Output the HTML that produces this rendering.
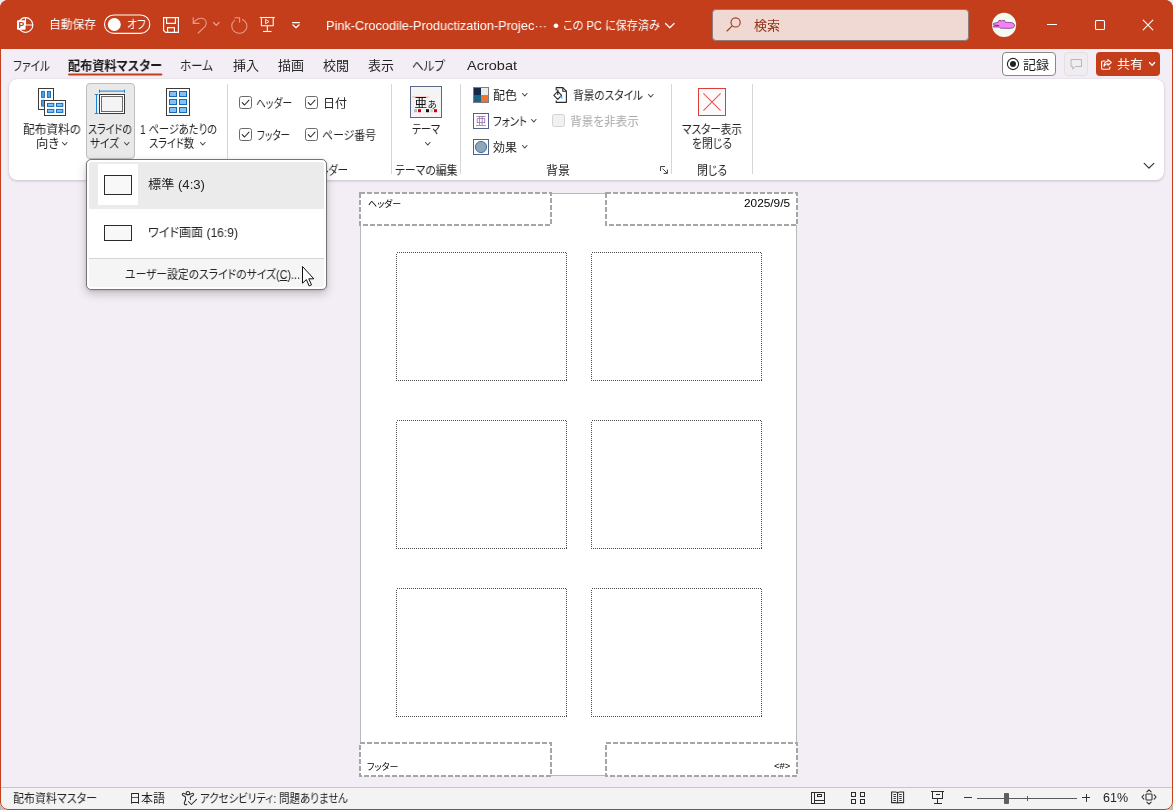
<!DOCTYPE html>
<html lang="ja"><head><meta charset="utf-8"><title>PowerPoint - 配布資料マスター</title>
<style>
html,body{margin:0;padding:0;}
body{width:1173px;height:810px;overflow:hidden;background:linear-gradient(#ececec 0,#ececec 50%,#bdbdbd 50%,#bdbdbd 100%);font-family:"Liberation Sans","Noto Sans CJK JP",sans-serif;}
#win{position:absolute;left:0;top:0;width:1173px;height:810px;border-radius:8px;background:#f3edf5;overflow:hidden;}
#win>*{position:absolute;}
#frame{position:absolute;left:0;top:0;width:1171px;height:808px;border:1px solid #c43e1c;border-radius:8px;pointer-events:none;}
.a{position:absolute;}
.t{position:absolute;z-index:3;white-space:nowrap;transform-origin:0 50%;font-feature-settings:"palt";will-change:transform;}
.t u{text-decoration:underline;text-underline-offset:1px;}
#title{left:0;top:0;width:1173px;height:49px;background:#c43e1c;}
#ribbon{left:9px;top:79px;width:1155px;height:101px;background:#fff;border-radius:8px;box-shadow:0 1px 3px rgba(0,0,0,.18),0 0 1px rgba(0,0,0,.12);}
.vsep{width:1px;background:#d6d6d6;top:84px;height:90px;}
.cb{width:11px;height:11px;border:1px solid #6e6e6e;border-radius:2px;background:#fff;}
#status{left:0;top:787px;width:1173px;height:23px;background:#f3f3f3;border-top:1px solid #c8c6c4;}
#page{left:361px;top:194px;width:435px;height:581px;background:#fff;box-shadow:0 0 0 1px #d9d9d9;}
.ph{border:1px dotted #3a3a3a;width:169px;height:127px;background:#fff;}
.hf{border:2px dashed #a6a6a6;width:189px;height:29px;background:#fff;}
#menu{z-index:2;left:86px;top:159px;width:239px;height:129px;background:#fff;border:1px solid #757575;border-radius:5px;box-shadow:0 4px 10px rgba(0,0,0,.2),0 1px 3px rgba(0,0,0,.12);overflow:hidden;}

</style></head>
<body>
<div id="win">
<div id="title" style="left:0;top:0"></div>
<!-- PowerPoint logo -->
<svg style="left:16px;top:16px;will-change:transform" width="18" height="18" viewBox="0 0 18 18">
  <circle cx="9.5" cy="9" r="7.3" fill="none" stroke="#fff" stroke-width="1.2"/>
  <path d="M9.5 1.7 V9 H16.8" fill="none" stroke="#fff" stroke-width="1.1"/>
  <rect x="1" y="4.2" width="8.6" height="9.6" rx="1" fill="#fff"/>
  <text x="5.3" y="12.2" font-family="Liberation Sans, sans-serif" font-weight="700" font-size="8.6" fill="#c43e1c" text-anchor="middle">P</text>
</svg>
<!-- autosave toggle -->
<svg style="left:100px;top:10px" width="56" height="30" viewBox="100 10 56 30"><rect x="104.5" y="15" width="45.3" height="18.4" rx="9.2" fill="none" stroke="#fff" stroke-width="1.1"/><circle cx="114.3" cy="24.5" r="6.5" fill="#fff"/></svg>
<!-- save -->
<svg style="left:162px;top:16px" width="18" height="18" viewBox="0 0 18 18" fill="none" stroke="#fff" stroke-width="1.15">
  <path d="M1.6 1.6 H16.4 V16.4 H3.6 L1.6 14.4 Z"/>
  <path d="M4.6 1.6 V7.4 H13.4 V1.6"/>
  <path d="M5.6 16.4 V11.6 H12.4 V16.4"/>
</svg>
<!-- undo (dim) -->
<svg style="left:191px;top:16px" width="18" height="18" viewBox="0 0 18 18" fill="none" stroke="#e29e8b" stroke-width="1.1" stroke-linecap="round" stroke-linejoin="round">
  <path d="M2.2 1.6 V7.4 H8"/>
  <path d="M2.4 7.2 C4.5 3.6 8.6 1.4 12 2.6 C15.4 3.8 16.2 7.6 14.2 10.4 L7.2 17"/>
</svg>
<!-- redo (dim) -->
<svg style="left:228.8px;top:15.9px" width="20" height="19" viewBox="0 0 20 20" preserveAspectRatio="none" fill="none" stroke="#e29e8b" stroke-width="1.1" stroke-linecap="round" stroke-linejoin="round">
  <path d="M10.6 1.8 V6.6 M10.6 1.8 H6"/>
  <path d="M5.6 4.6 A7.6 7.6 0 1 0 13.4 3.6"/>
</svg>
<!-- present from beginning -->
<svg style="left:258.6px;top:16px" width="16.6" height="17" viewBox="0 0 18 18" preserveAspectRatio="none" fill="none" stroke="#fff" stroke-width="1.15">
  <path d="M0.8 1.6 H17.2"/>
  <path d="M2.6 1.6 V10.4 H15.4 V1.6"/>
  <path d="M9 10.4 V16"/>
  <path d="M4.4 16.4 H13.6"/>
  <path d="M7.2 3.6 L10.8 5.9 L7.2 8.2 Z" stroke-width="1"/>
</svg>
<!-- customize QAT -->
<svg style="left:291.4px;top:20.6px" width="10" height="9" viewBox="0 0 10 9" fill="none" stroke="#fff" stroke-width="1.2" stroke-linecap="round" stroke-linejoin="round">
  <path d="M1.6 1.6 H8.4"/>
  <path d="M1.8 3.8 L5 6.8 L8.2 3.8"/>
</svg>
<!-- search -->
<div style="left:712px;top:9px;width:255px;height:30px;background:#f0d9d2;border:1px solid #8f7d7a;border-radius:4px;"></div>
<svg style="left:724.5px;top:16px" width="18" height="18" viewBox="0 0 18 18" fill="none" stroke="#a03a20" stroke-width="1.15" stroke-linecap="round">
  <circle cx="10.6" cy="6.4" r="4.6"/>
  <path d="M7.2 9.8 L2 15"/>
</svg>
<!-- avatar -->
<svg style="left:988px;top:9px" width="32" height="32" viewBox="988 9 32 32">
  <circle cx="1004.1" cy="24.9" r="12.05" fill="#f5faf3"/>
  <path d="M993.5 23.4 L997.9 22.3 L998.9 20.5 L1001 20.4 L1001.5 21.3 L1002.2 20.4 L1004.6 20.4 L1005.2 22.2 L1011.6 22.6 C1013.6 22.9 1014.6 24.2 1014.6 25.5 C1014.4 27 1013.4 27.8 1012.4 28 L1009.5 28.4 L1000.6 28.2 L999.2 27.1 L993.5 27.1 C993 26.6 993.2 26.2 993.8 25.9 L998.9 25.5 L993.8 25.1 C993 24.6 993 23.9 993.5 23.4 Z" fill="#f77ff7" stroke="#3d0f40" stroke-width=".55" stroke-linejoin="round"/>
</svg>
<!-- window controls -->
<svg style="left:1045.7px;top:18.6px" width="12" height="12" viewBox="0 0 12 12" stroke="#fff" stroke-width="1.1" fill="none"><path d="M1 5.5 H11"/></svg>
<svg style="left:1093.7px;top:18.8px" width="12" height="12" viewBox="0 0 12 12" stroke="#fff" stroke-width="1.1" fill="none"><rect x="1.5" y="1.5" width="9" height="9" rx="1"/></svg>
<svg style="left:1141.8px;top:18.8px" width="12" height="12" viewBox="0 0 12 12" stroke="#fff" stroke-width="1.1" fill="none" stroke-linecap="round"><path d="M1.2 1.2 L10.8 10.8 M10.8 1.2 L1.2 10.8"/></svg>

<!-- tab underline -->
<svg style="left:66px;top:72px" width="100" height="5" viewBox="66 72 100 5"><rect x="68" y="73.4" width="94.4" height="2.1" rx="1" fill="#c43e1c"/></svg>
<!-- record button -->
<div style="left:1002px;top:52px;width:52px;height:22px;background:#fff;border:1px solid #8a8886;border-radius:4px;"></div>
<svg style="left:1006px;top:57px" width="14" height="14" viewBox="0 0 14 14"><circle cx="7" cy="7" r="5.6" fill="none" stroke="#222" stroke-width="1.1"/><circle cx="7" cy="7" r="3" fill="#222"/></svg>
<!-- comments (disabled) -->
<div style="left:1064px;top:52px;width:22px;height:22px;background:#efedf0;border:1px solid #e2e0e3;border-radius:4px;"></div>
<svg style="left:1068.5px;top:57px" width="14" height="14" viewBox="0 0 14 14" fill="none" stroke="#b9b5ba" stroke-width="1"><path d="M2 2.5 H12.5 V9.5 H6.5 L3.8 12.2 V9.5 H2 Z" stroke-linejoin="round"/></svg>
<!-- share -->
<div style="left:1096px;top:52px;width:64px;height:24px;background:#c43e1c;border-radius:4px;"></div>
<svg style="left:1100.2px;top:57.6px" width="13" height="13" viewBox="0 0 15 15" fill="none" stroke="#fff" stroke-width="1.3" stroke-linecap="round" stroke-linejoin="round">
  <path d="M5.6 3.4 H3.4 C2.4 3.4 1.8 4 1.8 5 V11.4 C1.8 12.4 2.4 13 3.4 13 H9.8 C10.8 13 11.4 12.4 11.4 11.4 V10.4"/>
  <path d="M9.2 1.8 L13 5.2 L9.2 8.6 V6.6 C6.8 6.6 5.4 7.6 4.6 9.6 C4.6 6.4 6.2 4.2 9.2 3.8 Z"/>
</svg>
<svg style="left:1171px;top:1px" width="0" height="0"></svg>

<div id="ribbon"></div>
<!-- group 1: page setup -->
<svg style="left:36px;top:86px" width="32" height="32" viewBox="36 86 32 32">
  <rect x="38.5" y="88.5" width="15" height="21" fill="#fff" stroke="#3b3b3b" stroke-width="1"/>
  <g fill="#4ea3ea" stroke="#0f64b8" stroke-width=".9">
  <rect x="41.6" y="91.4" width="2.8" height="6"/><rect x="47.4" y="91.4" width="3.1" height="6"/><rect x="41.6" y="100.3" width="2.8" height="5.8"/>
  </g>
  <rect x="44.5" y="100.5" width="21" height="15" fill="#fff" stroke="#3b3b3b" stroke-width="1"/>
  <g fill="#86c0f0" stroke="#0f6cbd" stroke-width="1">
  <rect x="47.5" y="103.4" width="6.3" height="3"/><rect x="56.5" y="103.4" width="6.3" height="3"/>
  <rect x="47.5" y="109.4" width="6.3" height="3"/><rect x="56.5" y="109.4" width="6.3" height="3"/>
  </g>
</svg>
<div style="left:86px;top:83px;width:47px;height:74px;background:#e9e9e9;border:1px solid #bdbdbd;border-radius:4px;"></div>
<svg style="left:94px;top:87px" width="34" height="30" viewBox="94 87 34 30" fill="none">
  <path d="M99.5 91.1 H124.5 M99.5 89.6 V92.8 M124.5 89.6 V92.8" stroke="#1e7fd6" stroke-width="1"/>
  <path d="M96.5 94.5 V113.5 M94.8 94.5 H98.2 M94.8 113.5 H98.2" stroke="#1e7fd6" stroke-width="1"/>
  <rect x="99.5" y="94.5" width="25" height="19" fill="#fff" stroke="#3b3b3b" stroke-width="1"/>
  <rect x="101.5" y="96.5" width="21" height="15" fill="#f4f4f4" stroke="#6a6a6a" stroke-width="1"/>
</svg>
<svg style="left:164px;top:86px" width="28" height="32" viewBox="164 86 28 32">
  <rect x="166.5" y="88.5" width="23" height="27" fill="#fff" stroke="#3b3b3b" stroke-width="1"/>
  <g fill="#86c0f0" stroke="#0f6cbd" stroke-width="1">
  <rect x="169.5" y="91.5" width="7" height="5"/><rect x="179.5" y="91.5" width="7" height="5"/>
  <rect x="169.5" y="99.5" width="7" height="5"/><rect x="179.5" y="99.5" width="7" height="5"/>
  <rect x="169.5" y="107.5" width="7" height="5"/><rect x="179.5" y="107.5" width="7" height="5"/>
  </g>
</svg>
<div class="vsep" style="left:227px"></div>
<!-- group 2: placeholders -->
<svg style="left:239px;top:96px" width="13" height="13" viewBox="0 0 13 13" fill="none"><rect x=".5" y=".5" width="12" height="12" rx="2" fill="#fff" stroke="#6a6a6a"/><path d="M3.2 6.6 L5.6 9 L10 4.2" stroke="#333" stroke-width="1.1" stroke-linecap="round" stroke-linejoin="round"/></svg>
<svg style="left:239px;top:128px" width="13" height="13" viewBox="0 0 13 13" fill="none"><rect x=".5" y=".5" width="12" height="12" rx="2" fill="#fff" stroke="#6a6a6a"/><path d="M3.2 6.6 L5.6 9 L10 4.2" stroke="#333" stroke-width="1.1" stroke-linecap="round" stroke-linejoin="round"/></svg>
<svg style="left:305px;top:96px" width="13" height="13" viewBox="0 0 13 13" fill="none"><rect x=".5" y=".5" width="12" height="12" rx="2" fill="#fff" stroke="#6a6a6a"/><path d="M3.2 6.6 L5.6 9 L10 4.2" stroke="#333" stroke-width="1.1" stroke-linecap="round" stroke-linejoin="round"/></svg>
<svg style="left:305px;top:128px" width="13" height="13" viewBox="0 0 13 13" fill="none"><rect x=".5" y=".5" width="12" height="12" rx="2" fill="#fff" stroke="#6a6a6a"/><path d="M3.2 6.6 L5.6 9 L10 4.2" stroke="#333" stroke-width="1.1" stroke-linecap="round" stroke-linejoin="round"/></svg>
<div class="vsep" style="left:391px"></div>
<!-- group 3: theme -->
<svg style="left:410px;top:86px;will-change:transform" width="32" height="32" viewBox="0 0 32 32">
  <rect x=".5" y=".5" width="31" height="31" fill="#f4f4f4" stroke="#5b6785"/>
  <rect x="2" y="10" width="17.5" height="2" fill="#f6c9c6" opacity=".8"/>
  <text x="4.4" y="21.4" font-family="Liberation Sans, Noto Sans CJK JP, sans-serif" font-size="12.6" fill="#111">亜</text>
  <text x="17.4" y="21.6" font-family="Liberation Sans, Noto Sans CJK JP, sans-serif" font-size="9.4" fill="#111">あ</text>
  <rect x="4" y="23.2" width="3" height="3" fill="#a9bdcc"/><rect x="8" y="23.2" width="3" height="3" fill="#c80000"/>
  <rect x="16" y="23.2" width="3" height="3" fill="#111"/><rect x="20" y="23.2" width="3" height="3" fill="#c9d5df"/><rect x="24" y="23.2" width="3" height="3" fill="#c80000"/>
</svg>
<div class="vsep" style="left:460px"></div>
<!-- group 4: background -->
<svg style="left:473px;top:87px" width="16" height="16" viewBox="0 0 16 16">
  <rect x="0" y="0" width="16" height="16" fill="#7d7d7d"/>
  <rect x="1" y="1" width="7" height="7" fill="#14284b"/><rect x="8" y="1" width="7" height="7" fill="#ebebeb"/>
  <rect x="1" y="8" width="7" height="7" fill="#1a6385"/><rect x="8" y="8" width="7" height="7" fill="#ec7331"/>
</svg>
<svg style="left:473px;top:113px;will-change:transform" width="16" height="16" viewBox="0 0 16 16">
  <rect x=".5" y=".5" width="15" height="15" fill="#fff" stroke="#55618a"/>
  <text x="8" y="12.2" text-anchor="middle" font-family="Liberation Sans, Noto Sans CJK JP, sans-serif" font-size="11" fill="#8a62a0" opacity=".9">亜</text>
</svg>
<svg style="left:473px;top:139px" width="16" height="16" viewBox="0 0 16 16">
  <rect x=".5" y=".5" width="15" height="15" fill="#fbfbfb" stroke="#55618a"/>
  <circle cx="8" cy="8" r="5.6" fill="#90a6b9" stroke="#2c6e8f" stroke-width=".9"/>
</svg>
<svg style="left:552px;top:86px" width="17" height="18" viewBox="552 86 17 18" fill="none" stroke="#2b2b2b" stroke-width="1.1" stroke-linejoin="round">
  <path d="M556.2 90.6 V87.6 H562.8 L566.4 91.2 V102.4 H556.2 V100.6"/>
  <path d="M562.8 87.6 V91.2 H566.4"/>
  <path d="M557.8 91.4 L561.6 95.4 L557.8 99.4 L553.8 95.4 Z" fill="#fff"/>
  <path d="M557.8 89.6 V95" />
  <path d="M560 96.2 L562 96.2 L562 98.6 Z" fill="#3b9be8" stroke="#3b9be8" stroke-width=".6"/>
</svg>
<svg style="left:552px;top:114px" width="13" height="13" viewBox="0 0 13 13"><rect x=".5" y=".5" width="12" height="12" rx="2" fill="#f1f1f1" stroke="#d2d2d2"/></svg>
<svg style="left:659px;top:165px" width="10" height="10" viewBox="0 0 10 10" fill="none" stroke="#444" stroke-width="1"><path d="M1.5 6 V1.5 H6"/><path d="M3.6 3.6 L8.2 8.2 M8.4 4.6 V8.4 H4.6"/></svg>
<div class="vsep" style="left:671px"></div>
<!-- group 5: close -->
<svg style="left:698px;top:88px" width="28" height="28" viewBox="0 0 28 28" fill="none"><rect x=".5" y=".5" width="27" height="27" fill="#fafafa" stroke="#e03a3a"/><path d="M5.4 5.4 L22.6 22.6 M22.6 5.4 L5.4 22.6" stroke="#f05656" stroke-width="1.1"/></svg>
<div class="vsep" style="left:752px"></div>
<!-- ribbon collapse chevron -->
<svg style="left:1143px;top:162px" width="12" height="8" viewBox="0 0 12 8" fill="none" stroke="#333" stroke-width="1.2" stroke-linecap="round" stroke-linejoin="round"><path d="M1.2 1.4 L6 6.2 L10.8 1.4"/></svg>

<div id="status"></div>
<!-- accessibility icon -->
<svg style="left:178px;top:788px" width="22" height="20" viewBox="178 788 22 20" fill="none" stroke="#2b2b2b" stroke-width="1.05" stroke-linecap="round" stroke-linejoin="round">
  <circle cx="187.9" cy="793.2" r="1.75"/>
  <path d="M182.4 794.7 C182 793.4 183.4 792.9 184.4 793.6 C186 794.9 189.8 794.9 191.6 793.6 C192.6 792.9 194 793.4 193.6 794.7 C193.2 795.7 191.2 796 190.6 796.8 C190.2 797.6 190.3 798.6 190.4 799.6"/>
  <path d="M182.4 794.7 C182.8 795.7 184.8 796 185.4 796.8 C186 798.6 185.6 800.4 184.6 802.2 C184 803.4 184.2 804.6 185.4 804.8 C186 804.9 186.6 804.6 186.8 804.2"/>
  <path d="M188.4 801.5 L191.4 804.5 L196.5 799.3"/>
</svg>
<!-- view buttons -->
<svg style="left:808px;top:788px" width="140" height="20" viewBox="808 788 140 20" fill="none" stroke="#2b2b2b" stroke-width="1" shape-rendering="crispEdges">
  <rect x="811.5" y="792.5" width="13" height="11"/><path d="M814.5 792.5 V803.5 M814.5 800.5 H824.5"/><rect x="817.5" y="794.5" width="4" height="2"/>
  <rect x="851.5" y="792.5" width="4" height="4"/><rect x="860.5" y="792.5" width="4" height="4"/><rect x="851.5" y="799.5" width="4" height="4"/><rect x="860.5" y="799.5" width="4" height="4"/>
  <g shape-rendering="auto" stroke-width="1.05"><path d="M891.6 792 H895.6 Q897.6 792 897.6 793.4 V803.6 Q897.6 802.6 895.6 802.6 H891.6 Z M903.6 792 H899.6 Q897.6 792 897.6 793.4 V803.6 Q897.6 802.6 899.6 802.6 H903.6 Z"/>
  <path d="M893.4 794.5 H896 M893.4 796.5 H896 M893.4 798.5 H896 M893.4 800.5 H896 M899.2 794.5 H901.8 M899.2 796.5 H901.8 M899.2 798.5 H901.8 M899.2 800.5 H901.8" stroke-width=".9"/></g>
  <path d="M931 791.5 H944 M932.5 791.5 V798.5 H942.5 V791.5 M937.5 798.5 V803.5 M934 803.5 H941.5 M935.5 794.5 H939.5"/>
</svg>
<!-- zoom slider -->
<div style="left:964px;top:797px;width:8px;height:1px;background:#333;"></div>
<div style="left:977px;top:798px;width:100px;height:1px;background:#5a5a5a;"></div>
<div style="left:1004px;top:793px;width:5px;height:11px;background:#5f5f5f;border-radius:1px;"></div>
<div style="left:1027px;top:796px;width:1px;height:5px;background:#5a5a5a;"></div>
<div style="left:1082px;top:797px;width:8px;height:1px;background:#333;"></div>
<div style="left:1085.5px;top:794px;width:1px;height:8px;background:#333;"></div>
<!-- fit to window -->
<svg style="left:1140.6px;top:789.4px" width="16" height="16" viewBox="0 0 18 18" fill="none" stroke="#2b2b2b" stroke-width="1.2" stroke-linejoin="round" stroke-linecap="round"><rect x="5.6" y="5.6" width="6.8" height="6.8" rx="1"/><path d="M6.6 3.2 L9 1 L11.4 3.2 M6.6 14.8 L9 17 L11.4 14.8 M3.2 6.6 L1 9 L3.2 11.4 M14.8 6.6 L17 9 L14.8 11.4"/></svg>

<svg style="left:355px;top:188px" width="446" height="592" viewBox="355 188 446 592" fill="none">
<rect x="360.5" y="193.5" width="436" height="582" fill="#fff" stroke="#b9b9b9" stroke-width="1"/>
<g stroke="#a6a6a6" stroke-width="2" stroke-dasharray="5 2" fill="#fff">
<rect x="360" y="193" width="191" height="32"/><rect x="606" y="193" width="191" height="32"/>
<rect x="360" y="743" width="191" height="33"/><rect x="606" y="743" width="191" height="33"/>
</g>
<g stroke="#4c4c4c" stroke-width="1" stroke-dasharray="1 1" shape-rendering="crispEdges"><rect x="396.5" y="252.5" width="170" height="128"/><rect x="591.5" y="252.5" width="170" height="128"/><rect x="396.5" y="420.5" width="170" height="128"/><rect x="591.5" y="420.5" width="170" height="128"/><rect x="396.5" y="588.5" width="170" height="128"/><rect x="591.5" y="588.5" width="170" height="128"/></g>
</svg>

<div id="menu">
  <div style="position:absolute;left:2px;top:2px;width:235px;height:47px;background:#ebebeb;border-radius:3px 3px 0 0;"></div>
  <div style="position:absolute;left:11px;top:4px;width:40px;height:41px;background:#fff;"></div>
  <div style="position:absolute;left:17px;top:15px;width:26px;height:18px;background:#f8f8f8;border:1px solid #2b2b2b;"></div>
  <div style="position:absolute;left:17px;top:65px;width:26px;height:14px;background:#f8f8f8;border:1px solid #2b2b2b;"></div>
  <div style="position:absolute;left:2px;top:98px;width:235px;height:1px;background:#d4d4d4;"></div>
  <div style="position:absolute;left:2px;top:99px;width:235px;height:28px;background:#f5f5f5;border-radius:0 0 3px 3px;"></div>
</div>
<svg style="left:301px;top:265px;z-index:4" width="14" height="24" viewBox="0 0 14 24"><path d="M1.5 1.5 V18.2 L5.4 14.6 L8.1 20.9 L10.5 19.9 L7.8 13.8 H12.8 Z" fill="#fff" stroke="#111" stroke-width="1" stroke-linejoin="round"/></svg>


<svg class="a" style="left:60.75px;top:140.75px" width="7.5" height="5.5" viewBox="-1.5 -1.5 7.5 5.5"><path d="M0 0 L2.25 2.5 L4.5 0" fill="none" stroke="#444" stroke-width="1.1" stroke-linecap="round" stroke-linejoin="round"/></svg><svg class="a" style="left:122.85px;top:140.75px" width="7.5" height="5.5" viewBox="-1.5 -1.5 7.5 5.5"><path d="M0 0 L2.25 2.5 L4.5 0" fill="none" stroke="#444" stroke-width="1.1" stroke-linecap="round" stroke-linejoin="round"/></svg><svg class="a" style="left:198.85px;top:140.75px" width="7.5" height="5.5" viewBox="-1.5 -1.5 7.5 5.5"><path d="M0 0 L2.25 2.5 L4.5 0" fill="none" stroke="#444" stroke-width="1.1" stroke-linecap="round" stroke-linejoin="round"/></svg><svg class="a" style="left:423.55px;top:140.85px" width="7.5" height="5.5" viewBox="-1.5 -1.5 7.5 5.5"><path d="M0 0 L2.25 2.5 L4.5 0" fill="none" stroke="#444" stroke-width="1.1" stroke-linecap="round" stroke-linejoin="round"/></svg><svg class="a" style="left:520.75px;top:92.25px" width="7.5" height="5.5" viewBox="-1.5 -1.5 7.5 5.5"><path d="M0 0 L2.25 2.5 L4.5 0" fill="none" stroke="#444" stroke-width="1.1" stroke-linecap="round" stroke-linejoin="round"/></svg><svg class="a" style="left:530.25px;top:118.45px" width="7.5" height="5.5" viewBox="-1.5 -1.5 7.5 5.5"><path d="M0 0 L2.25 2.5 L4.5 0" fill="none" stroke="#444" stroke-width="1.1" stroke-linecap="round" stroke-linejoin="round"/></svg><svg class="a" style="left:520.75px;top:144.45px" width="7.5" height="5.5" viewBox="-1.5 -1.5 7.5 5.5"><path d="M0 0 L2.25 2.5 L4.5 0" fill="none" stroke="#444" stroke-width="1.1" stroke-linecap="round" stroke-linejoin="round"/></svg><svg class="a" style="left:646.75px;top:92.75px" width="7.5" height="5.5" viewBox="-1.5 -1.5 7.5 5.5"><path d="M0 0 L2.25 2.5 L4.5 0" fill="none" stroke="#444" stroke-width="1.1" stroke-linecap="round" stroke-linejoin="round"/></svg><svg class="a" style="left:211.90px;top:21.10px" width="8.6" height="5.8" viewBox="-1.5 -1.5 8.6 5.8"><path d="M0 0 L2.8 2.8 L5.6 0" fill="none" stroke="#e9a794" stroke-width="1.1" stroke-linecap="round" stroke-linejoin="round"/></svg><svg class="a" style="left:663.70px;top:21.85px" width="11.6" height="7.3" viewBox="-1.5 -1.5 11.6 7.3"><path d="M0 0 L4.3 4.3 L8.6 0" fill="none" stroke="#fff" stroke-width="1.2" stroke-linecap="round" stroke-linejoin="round"/></svg><svg class="a" style="left:1148.40px;top:61.45px" width="8.2" height="5.7" viewBox="-1.5 -1.5 8.2 5.7"><path d="M0 0 L2.6 2.7 L5.2 0" fill="none" stroke="#fff" stroke-width="1.3" stroke-linecap="round" stroke-linejoin="round"/></svg>
<span class="t" id="t0" style="left:49px;top:16.0px;font-size:12px;line-height:18px;color:#fff;font-weight:400;transform:scaleX(0.9788);">自動保存</span><span class="t" id="t1" style="left:127px;top:16.1px;font-size:12px;line-height:18px;color:#fff;font-weight:400;transform:scaleX(0.8783);">オフ</span><span class="t" id="t2" style="left:326px;top:15.7px;font-size:13px;line-height:20px;color:#fff;font-weight:400;transform:scaleX(0.9805);">Pink-Crocodile-Productization-Projec···</span><span class="t" id="t3" style="left:552.5px;top:12.600000000000001px;font-size:17px;line-height:26px;color:#fff;font-weight:400;transform:scaleX(1.0079);">•</span><span class="t" id="t4" style="left:563px;top:16.7px;font-size:12px;line-height:18px;color:#fff;font-weight:400;transform:scaleX(0.9274);">この PC に保存済み</span><span class="t" id="t5" style="left:754px;top:16.2px;font-size:13px;line-height:20px;color:#8f3219;font-weight:400;transform:scaleX(0.9994);">検索</span><span class="t" id="t6" style="left:13px;top:55.7px;font-size:13px;line-height:20px;color:#242424;font-weight:400;transform:scaleX(0.8217);">ファイル</span><span class="t" id="t7" style="left:68px;top:55.7px;font-size:13px;line-height:20px;color:#1b1b1b;font-weight:700;transform:scaleX(0.9331);">配布資料マスター</span><span class="t" id="t8" style="left:180px;top:55.7px;font-size:13px;line-height:20px;color:#242424;font-weight:400;transform:scaleX(0.8870);">ホーム</span><span class="t" id="t9" style="left:232.8px;top:55.7px;font-size:13px;line-height:20px;color:#242424;font-weight:400;transform:scaleX(0.9840);">挿入</span><span class="t" id="t10" style="left:278px;top:55.7px;font-size:13px;line-height:20px;color:#242424;font-weight:400;transform:scaleX(0.9994);">描画</span><span class="t" id="t11" style="left:323px;top:55.7px;font-size:13px;line-height:20px;color:#242424;font-weight:400;transform:scaleX(0.9994);">校閲</span><span class="t" id="t12" style="left:367.8px;top:55.7px;font-size:13px;line-height:20px;color:#242424;font-weight:400;transform:scaleX(0.9994);">表示</span><span class="t" id="t13" style="left:412.3px;top:55.7px;font-size:13px;line-height:20px;color:#242424;font-weight:400;transform:scaleX(0.8844);">ヘルプ</span><span class="t" id="t14" style="left:467px;top:56.0px;font-size:13.5px;line-height:20px;color:#242424;font-weight:400;transform:scaleX(1.0745);">Acrobat</span><span class="t" id="t15" style="left:1023px;top:56.5px;font-size:12.5px;line-height:19px;color:#1b1b1b;font-weight:400;transform:scaleX(1.0394);">記録</span><span class="t" id="t16" style="left:1117px;top:56.3px;font-size:12.5px;line-height:19px;color:#fff;font-weight:400;transform:scaleX(1.0394);">共有</span><span class="t" id="t17" style="left:23px;top:120.69999999999999px;font-size:12px;line-height:18px;color:#242424;font-weight:400;transform:scaleX(0.9735);">配布資料の</span><span class="t" id="t18" style="left:36px;top:135.2px;font-size:12px;line-height:18px;color:#242424;font-weight:400;transform:scaleX(1.0222);">向き</span><span class="t" id="t19" style="left:88px;top:120.69999999999999px;font-size:12px;line-height:18px;color:#242424;font-weight:400;transform:scaleX(0.8331);">スライドの</span><span class="t" id="t20" style="left:90px;top:135.2px;font-size:12px;line-height:18px;color:#242424;font-weight:400;transform:scaleX(0.8885);">サイズ</span><span class="t" id="t21" style="left:140px;top:120.69999999999999px;font-size:12px;line-height:18px;color:#242424;font-weight:400;transform:scaleX(0.8536);">1 ページあたりの</span><span class="t" id="t22" style="left:149px;top:135.2px;font-size:12px;line-height:18px;color:#242424;font-weight:400;transform:scaleX(0.8451);">スライド数</span><span class="t" id="t23" style="left:256.3px;top:94.7px;font-size:12px;line-height:18px;color:#242424;font-weight:400;transform:scaleX(0.8110);">ヘッダー</span><span class="t" id="t24" style="left:256.6px;top:126.69999999999999px;font-size:12px;line-height:18px;color:#242424;font-weight:400;transform:scaleX(0.7901);">フッター</span><span class="t" id="t25" style="left:323px;top:94.7px;font-size:12px;line-height:18px;color:#242424;font-weight:400;transform:scaleX(0.9993);">日付</span><span class="t" id="t26" style="left:322.2px;top:126.69999999999999px;font-size:12px;line-height:18px;color:#242424;font-weight:400;transform:scaleX(0.9068);">ページ番号</span><span class="t" id="t27" style="left:270.5px;top:161.7px;font-size:12px;line-height:18px;color:#242424;font-weight:400;transform:scaleX(0.8624);z-index:1;">プレースホルダー</span><span class="t" id="t28" style="left:412px;top:120.69999999999999px;font-size:12px;line-height:18px;color:#242424;font-weight:400;transform:scaleX(0.8366);">テーマ</span><span class="t" id="t29" style="left:394.5px;top:161.7px;font-size:12px;line-height:18px;color:#242424;font-weight:400;transform:scaleX(0.9054);">テーマの編集</span><span class="t" id="t30" style="left:492.8px;top:87.2px;font-size:12px;line-height:18px;color:#242424;font-weight:400;transform:scaleX(0.9993);">配色</span><span class="t" id="t31" style="left:492.8px;top:113.2px;font-size:12px;line-height:18px;color:#242424;font-weight:400;transform:scaleX(0.8652);">フォント</span><span class="t" id="t32" style="left:492.8px;top:139.2px;font-size:12px;line-height:18px;color:#242424;font-weight:400;transform:scaleX(0.9993);">効果</span><span class="t" id="t33" style="left:572.8px;top:87.2px;font-size:12px;line-height:18px;color:#242424;font-weight:400;transform:scaleX(0.8899);">背景のスタイル</span><span class="t" id="t34" style="left:570px;top:113.2px;font-size:12px;line-height:18px;color:#a8a8a8;font-weight:400;transform:scaleX(0.9708);">背景を非表示</span><span class="t" id="t35" style="left:546px;top:161.7px;font-size:12px;line-height:18px;color:#242424;font-weight:400;transform:scaleX(0.9993);">背景</span><span class="t" id="t36" style="left:682px;top:120.69999999999999px;font-size:12px;line-height:18px;color:#242424;font-weight:400;transform:scaleX(0.8844);">マスター表示</span><span class="t" id="t37" style="left:692px;top:135.2px;font-size:12px;line-height:18px;color:#242424;font-weight:400;transform:scaleX(0.9024);">を閉じる</span><span class="t" id="t38" style="left:697px;top:161.7px;font-size:12px;line-height:18px;color:#242424;font-weight:400;transform:scaleX(0.9023);">閉じる</span><span class="t" id="t39" style="left:148px;top:175.7px;font-size:12.5px;line-height:19px;color:#242424;font-weight:400;transform:scaleX(1.0519);">標準 (4:3)</span><span class="t" id="t40" style="left:148px;top:224.0px;font-size:12.5px;line-height:19px;color:#242424;font-weight:400;transform:scaleX(0.9661);">ワイド画面 (16:9)</span><span class="t" id="t41" style="left:125px;top:265.7px;font-size:12px;line-height:18px;color:#242424;font-weight:400;transform:scaleX(0.9006);">ユーザー設定のスライドのサイズ(<u>C</u>)...</span><span class="t" id="t42" style="left:367.5px;top:196.5px;font-size:9px;line-height:14px;color:#000;font-weight:400;transform:scaleX(0.9911);">ヘッダー</span><span class="t" id="t43" style="left:744px;top:195.5px;font-size:10px;line-height:15px;color:#000;font-weight:400;transform:scaleX(1.1814);">2025/9/5</span><span class="t" id="t44" style="left:366.5px;top:759.5px;font-size:9px;line-height:14px;color:#000;font-weight:400;transform:scaleX(0.9895);">フッター</span><span class="t" id="t45" style="left:774px;top:758.8px;font-size:9.5px;line-height:14px;color:#000;font-weight:400;transform:scaleX(0.9762);">&lt;#&gt;</span><span class="t" id="t46" style="left:13px;top:790.0px;font-size:12px;line-height:18px;color:#242424;font-weight:400;transform:scaleX(0.9146);">配布資料マスター</span><span class="t" id="t47" style="left:129px;top:790.0px;font-size:12px;line-height:18px;color:#242424;font-weight:400;transform:scaleX(0.9996);">日本語</span><span class="t" id="t48" style="left:200px;top:790.0px;font-size:12px;line-height:18px;color:#242424;font-weight:400;transform:scaleX(0.8709);">アクセシビリティ: 問題ありません</span><span class="t" id="t49" style="left:1103px;top:788.5px;font-size:12.5px;line-height:19px;color:#242424;font-weight:400;transform:scaleX(0.9988);">61%</span>
</div>
<div id="frame"></div>
</body></html>
